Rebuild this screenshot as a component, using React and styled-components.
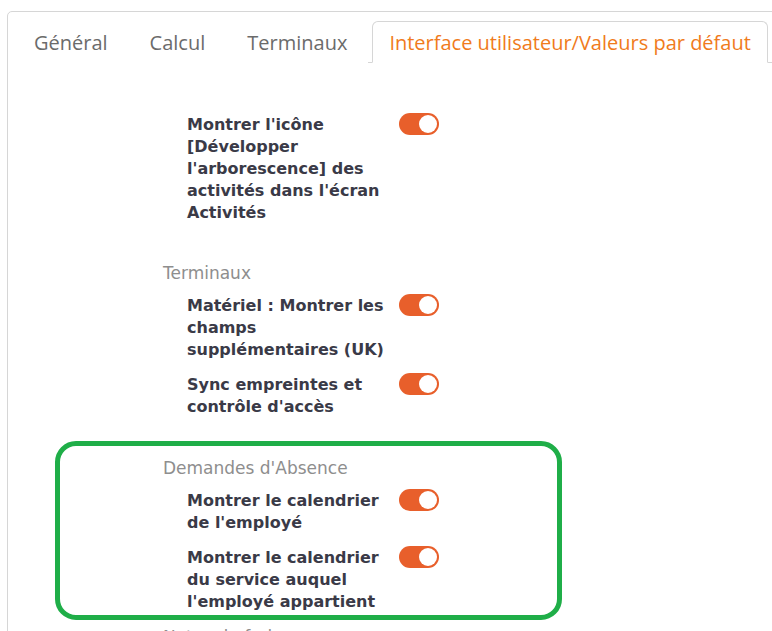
import styled, { createGlobalStyle } from "styled-components";

const Global = createGlobalStyle`
    html, body {
        margin: 0;
        padding: 0;
        background: #ffffff;
        overflow: hidden;
    }
`

const tabs = ["Général", "Calcul", "Terminaux", "Interface utilisateur/Valeurs par défaut"]

const sections = [
    {
        title: null,
        rows: ["Montrer l'icône [Développer l'arborescence] des activités dans l'écran Activités"],
    },
    {
        title: "Terminaux",
        rows: [
            "Matériel : Montrer les champs supplémentaires (UK)",
            "Sync empreintes et contrôle d'accès",
        ],
    },
    {
        title: "Demandes d'Absence",
        highlight: true,
        rows: [
            "Montrer le calendrier de l'employé",
            "Montrer le calendrier du service auquel l'employé appartient",
        ],
    },
    {
        title: "Notes de frais",
        tight: true,
        rows: [],
    },
]

function Toggle({ on }) {
    return (
        <Switch $on={on}>
            <Knob $on={on} />
        </Switch>
    )
}

function App() {
    return (
        <>
            <Global />
            <Panel>
                <TabList>
                    {tabs.map((t, i) => (
                        <Tab key={t} $active={i === tabs.length - 1}>{t}</Tab>
                    ))}
                </TabList>
                <Content>
                    {sections.map((s, i) => (
                        <Section key={i} $highlight={s.highlight} $tight={s.tight}>
                            {s.title && <Heading>{s.title}</Heading>}
                            <Rows>
                                {s.rows.map((r) => (
                                    <Row key={r}>
                                        <Label>{r}</Label>
                                        <Toggle on />
                                    </Row>
                                ))}
                            </Rows>
                        </Section>
                    ))}
                </Content>
            </Panel>
        </>
    )
}

const Panel = styled.div`
    margin: 11px 0 0 7px;
    width: 840px;
    height: 700px;
    border: 1px solid #d6d6d6;
    border-radius: 5px 0 0 0;
    box-sizing: border-box;
`
const TabList = styled.div`
    display: flex;
    margin: 9px 0 0 4px;
    border-bottom: 1px solid #d6d6d6;
    font-family: "Open Sans", "Noto Sans", sans-serif;
`
const Tab = styled.div`
    height: 40px;
    display: flex;
    align-items: center;
    padding: 0 ${p => p.$active ? "16px" : "20px"};
    margin-left: ${p => p.$active ? "4px" : "0"};
    font-size: 20px;
    color: ${p => p.$active ? "#f07b1c" : "#6b6b6b"};
    border: 1px solid ${p => p.$active ? "#d6d6d6" : "transparent"};
    border-bottom-color: ${p => p.$active ? "#ffffff" : "transparent"};
    border-radius: 6px 6px 0 0;
    background: #ffffff;
    margin-bottom: -1px;
    &:first-child {
        padding-left: 21px;
    }
`
const Content = styled.div`
    padding: 51px 0 0 155px;
    font-family: "DejaVu Sans", "Open Sans", sans-serif;
`
const Section = styled.div`
    position: relative;
    display: flex;
    flex-direction: column;
    gap: 12px;
    margin-top: ${p => p.$tight ? "14px" : p.$highlight ? "40px" : "39px"};
    &:first-child {
        margin-top: 0;
    }
    ${p => p.$highlight && `
        &::after {
            content: "";
            position: absolute;
            top: -17px;
            left: -108px;
            width: 507px;
            bottom: -7px;
            box-sizing: border-box;
            border: 5px solid #1fae48;
            border-radius: 21px;
            pointer-events: none;
        }
    `}
`
const Heading = styled.div`
    font-size: 17px;
    line-height: 20px;
    color: #8e8e8e;
`
const Rows = styled.div`
    display: flex;
    flex-direction: column;
    gap: 13px;
    &:empty {
        display: none;
    }
`
const Row = styled.div`
    display: flex;
    align-items: flex-start;
    gap: 8px;
    padding-left: 24px;
`
const Label = styled.div`
    width: 204px;
    font-size: 16px;
    font-weight: 700;
    line-height: 22px;
    color: #3a3a47;
`
const Switch = styled.div`
    position: relative;
    width: 40px;
    height: 22px;
    margin-top: -1px;
    border-radius: 11px;
    background: ${p => p.$on ? "#e85f2b" : "#cccccc"};
    flex-shrink: 0;
`
const Knob = styled.div`
    position: absolute;
    top: 2px;
    left: ${p => p.$on ? "20px" : "2px"};
    width: 18px;
    height: 18px;
    border-radius: 50%;
    background: #ffffff;
`

export default App
